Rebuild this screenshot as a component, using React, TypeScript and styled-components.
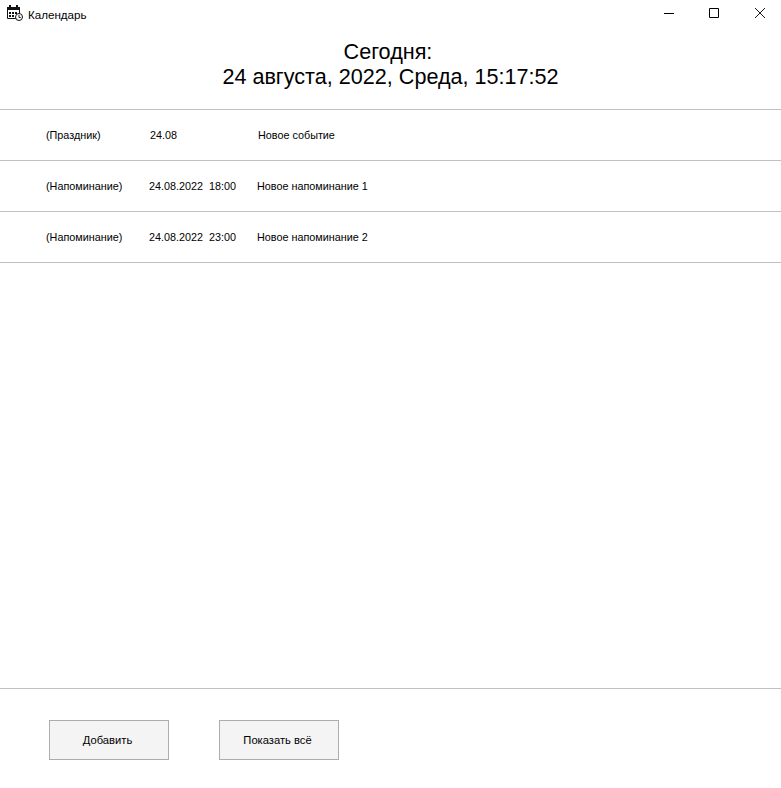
import styled, { createGlobalStyle } from "styled-components";

const GlobalStyle = createGlobalStyle`
  html, body {
    margin: 0;
    padding: 0;
    background: #fff;
  }
`;

const Window = styled.div`
  width: 781px;
  height: 788px;
  display: flex;
  flex-direction: column;
  background: #fff;
  color: #000;
  font-family: "Liberation Sans", Arial, sans-serif;
  overflow: hidden;
`;

const TitleBar = styled.div`
  height: 30px;
  display: flex;
  align-items: flex-start;
  justify-content: space-between;
  flex-shrink: 0;
`;

const TitleLeft = styled.div`
  height: 26px;
  display: flex;
  align-items: center;
  gap: 5px;
  padding-left: 7px;
  font-size: 11.6px;

  span {
    padding-top: 2px;
  }
`;

const WindowButtons = styled.div`
  display: flex;
  gap: 4px;
`;

const WindowButton = styled.div`
  width: 42px;
  height: 26px;
  display: flex;
  align-items: center;
  justify-content: center;

  &:first-child {
    margin-right: -1px;
  }
`;

const Heading = styled.h1`
  margin: 0;
  height: 79px;
  padding-top: 9px;
  box-sizing: border-box;
  font-size: 21.6px;
  font-weight: 400;
  line-height: 25px;
  text-align: center;
  flex-shrink: 0;
`;

const HeadingLabel = styled.div`
  padding-right: 5px;
`;

const EventList = styled.div`
  flex: 1;
  border-top: 1px solid #c0c0c0;
`;

const EventRow = styled.div`
  height: 50px;
  display: flex;
  align-items: center;
  padding-left: 46px;
  border-bottom: 1px solid #c0c0c0;
  font-size: 10.8px;
`;

const Kind = styled.span`
  width: 103px;
`;

const When = styled.span<{ $wide?: boolean }>`
  width: 108px;
  padding-left: ${(p) => (p.$wide ? "1px" : "0")};
  white-space: pre;
`;

const Footer = styled.div`
  height: 100px;
  border-top: 1px solid #c0c0c0;
  flex-shrink: 0;
  display: flex;
  gap: 50px;
  padding: 31px 0 0 49px;
  box-sizing: border-box;
`;

const ActionButton = styled.button`
  width: 120px;
  height: 40px;
  box-sizing: border-box;
  border: 1px solid #adadad;
  background: #f4f4f4;
  font-family: inherit;
  font-size: 11.2px;
  color: #000;
  padding: 0 3px 0 0;
`;

const events = [
  { kind: "(Праздник)", when: "24.08", title: "Новое событие", holiday: true },
  { kind: "(Напоминание)", when: "24.08.2022  18:00", title: "Новое напоминание 1" },
  { kind: "(Напоминание)", when: "24.08.2022  23:00", title: "Новое напоминание 2" },
];

function CalendarIcon() {
  return (
    <svg width="16" height="16" viewBox="0 0 16 16" fill="none">
      <path d="M.5 2.5h12v11H.5z" stroke="#111" />
      <path d="M0 2h13v3H0z" fill="#111" />
      <path d="M3 0v3M10 0v3" stroke="#111" strokeWidth="2" />
      <path d="M2 7h2v2H2zM5 7h2v2H5zM8 7h2v2H8zM2 10h2v2H2zM5 10h2v2H5z" fill="#111" />
      <circle cx="12" cy="12" r="3.5" fill="#fff" stroke="#111" />
      <path d="M12 10v2.5h1.8" stroke="#111" strokeWidth="0.9" />
    </svg>
  );
}

export default function App() {
  return (
    <Window>
      <GlobalStyle />
      <TitleBar>
        <TitleLeft>
          <CalendarIcon />
          <span>Календарь</span>
        </TitleLeft>
        <WindowButtons>
          <WindowButton>
            <svg width="10" height="10" viewBox="0 0 10 10">
              <path d="M0 5.5h10" stroke="#000" />
            </svg>
          </WindowButton>
          <WindowButton>
            <svg width="10" height="10" viewBox="0 0 10 10">
              <path d="M.5.5h9v9h-9z" stroke="#000" fill="none" />
            </svg>
          </WindowButton>
          <WindowButton>
            <svg width="10" height="10" viewBox="0 0 10 10">
              <path d="M0 0l10 10M10 0L0 10" stroke="#000" strokeWidth="0.9" />
            </svg>
          </WindowButton>
        </WindowButtons>
      </TitleBar>
      <Heading>
        <HeadingLabel>Сегодня:</HeadingLabel>
        24 августа, 2022, Среда, 15:17:52
      </Heading>
      <EventList>
        {events.map((e) => (
          <EventRow key={e.title}>
            <Kind>{e.kind}</Kind>
            <When $wide={e.holiday}>{e.when}</When>
            <span>{e.title}</span>
          </EventRow>
        ))}
      </EventList>
      <Footer>
        <ActionButton>Добавить</ActionButton>
        <ActionButton>Показать всё</ActionButton>
      </Footer>
    </Window>
  );
}
